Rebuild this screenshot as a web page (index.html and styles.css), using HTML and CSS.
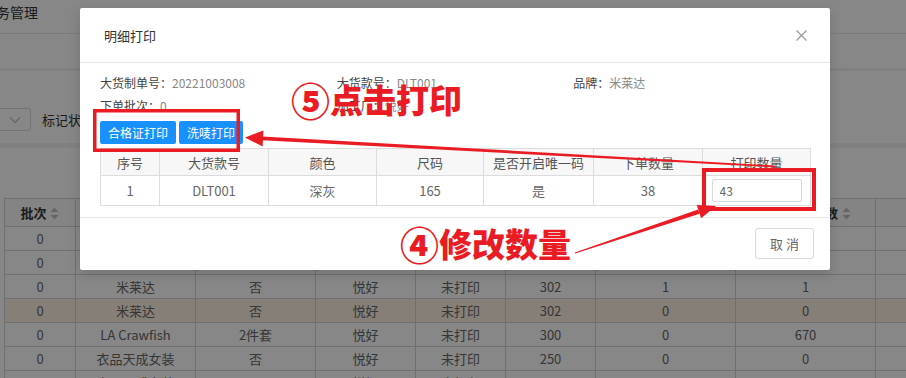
FILE: index.html
```html
<!DOCTYPE html>
<html lang="zh-CN">

<head>
    <meta charset="UTF-8">
    <meta name="viewport" content="width=device-width, initial-scale=1.0">
    <title>明细打印</title>
    <link rel="stylesheet" href="styles.css">
</head>

<body>
    <!-- page behind the dialog -->
    <div class="page">
        <div class="topbar"><span class="crumb">务管理</span></div>
        <div class="tabbar"></div>
        <div class="filter-card">
            <div class="select">
                <svg width="12" height="8" viewBox="0 0 12 8"><path d="M1 1.5 6 6.5 11 1.5" fill="none" stroke="#bfbfbf" stroke-width="1.2"/></svg>
            </div>
            <span class="filter-label">标记状态</span>
        </div>
        <div class="table-card">
            <table class="list-table">
                <colgroup>
                    <col style="width:71px"><col style="width:120px"><col style="width:120px"><col style="width:100px">
                    <col style="width:90px"><col style="width:90px"><col style="width:140px"><col style="width:140px"><col style="width:100px">
                </colgroup>
                <thead>
                    <tr>
                        <th>批次 <svg class="sort" width="9" height="13" viewBox="0 0 9 13"><path d="M4.5 0.5 8.5 5H0.5Z M4.5 12.5 8.5 8H0.5Z" fill="#bfbfbf"/></svg></th>
                        <th>品牌</th>
                        <th>是否套装</th>
                        <th>加工厂</th>
                        <th>状态</th>
                        <th>尺码数</th>
                        <th>已打印数</th>
                        <th>合格证打印数 <svg class="sort" width="9" height="13" viewBox="0 0 9 13"><path d="M4.5 0.5 8.5 5H0.5Z M4.5 12.5 8.5 8H0.5Z" fill="#bfbfbf"/></svg></th>
                        <th></th>
                    </tr>
                </thead>
                <tbody>
                    <tr><td>0</td><td>米莱达</td><td>否</td><td>悦好</td><td>未打印</td><td>165</td><td>0</td><td>0</td><td></td></tr>
                    <tr><td>0</td><td>米莱达</td><td>否</td><td>悦好</td><td>未打印</td><td>302</td><td>0</td><td>0</td><td></td></tr>
                    <tr><td>0</td><td>米莱达</td><td>否</td><td>悦好</td><td>未打印</td><td>302</td><td>1</td><td>1</td><td></td></tr>
                    <tr class="row-active"><td>0</td><td>米莱达</td><td>否</td><td>悦好</td><td>未打印</td><td>302</td><td>0</td><td>0</td><td></td></tr>
                    <tr><td>0</td><td>LA Crawfish</td><td>2件套</td><td>悦好</td><td>未打印</td><td>300</td><td>0</td><td>670</td><td></td></tr>
                    <tr><td>0</td><td>衣品天成女装</td><td>否</td><td>悦好</td><td>未打印</td><td>250</td><td>0</td><td>0</td><td></td></tr>
                    <tr><td>0</td><td>衣品天成女装</td><td>否</td><td>悦好</td><td>未打印</td><td>250</td><td>0</td><td>0</td><td></td></tr>
                </tbody>
            </table>
        </div>
    </div>

    <div class="mask"></div>

    <div class="modal">
        <div class="modal-header">
            <span class="modal-title">明细打印</span>
            <svg class="modal-close" width="11" height="11" viewBox="0 0 11 11"><path d="M0.5 0.5 10.5 10.5 M10.5 0.5 0.5 10.5" stroke="#999" stroke-width="1.2"/></svg>
        </div>
        <div class="modal-body">
            <div class="info-grid">
                <div class="info-item"><span class="info-label">大货制单号：</span><span class="info-value">20221003008</span></div>
                <div class="info-item"><span class="info-label">大货款号：</span><span class="info-value">DLT001</span></div>
                <div class="info-item"><span class="info-label">品牌：</span><span class="info-value">米莱达</span></div>
                <div class="info-item"><span class="info-label">下单批次：</span><span class="info-value">0</span></div>
                <div class="info-item"><span class="info-label">加工厂：</span><span class="info-value">悦好</span></div>
            </div>
            <div class="btn-group">
                <button class="btn-primary">合格证打印</button>
                <button class="btn-primary">洗唛打印</button>
            </div>
            <table class="detail-table">
                <colgroup>
                    <col style="width:59px"><col style="width:109px"><col style="width:108px"><col style="width:107px">
                    <col style="width:110px"><col style="width:109px"><col style="width:108px">
                </colgroup>
                <thead>
                    <tr><th>序号</th><th>大货款号</th><th>颜色</th><th>尺码</th><th>是否开启唯一码</th><th>下单数量</th><th>打印数量</th></tr>
                </thead>
                <tbody>
                    <tr>
                        <td>1</td><td>DLT001</td><td>深灰</td><td>165</td><td>是</td><td>38</td>
                        <td><input class="qty-input" type="text" value="43"></td>
                    </tr>
                </tbody>
            </table>
        </div>
        <div class="modal-footer">
            <button class="btn-default">取 消</button>
        </div>
    </div>

    <!-- red tutorial marks drawn over the screenshot -->
    <div class="annotations">
        <svg class="marks" width="906" height="378" viewBox="0 0 906 378">
            <rect x="94.75" y="110.75" width="143.5" height="39.5" fill="none" stroke="#ea1b23" stroke-width="3.5"/>
            <rect x="704" y="170" width="110" height="39" fill="none" stroke="#ea1b23" stroke-width="4"/>
            <polygon points="262.1,136.6 775,165.6 775,167.4 261.9,140.2" fill="#ea1b23"/>
            <polygon points="245,137.5 263.4,130.5 262.6,146.5" fill="#ea1b23"/>
            <polygon points="574.8,252.5 698.2,209.6 699.6,213.8 575.2,253.5" fill="#ea1b23"/>
            <polygon points="716,206 696.7,205.1 701.1,218.3" fill="#ea1b23"/>
        </svg>
        <span class="mark-text mark-print"><span class="mark-num">⑤</span>点击打印</span>
        <span class="mark-text mark-qty"><span class="mark-num">④</span>修改数量</span>
    </div>
</body>

</html>
```

FILE: styles.css
```css
* {
    box-sizing: border-box;
}

html,
body {
    margin: 0;
    padding: 0;
}

body {
    width: 906px;
    height: 378px;
    overflow: hidden;
    position: relative;
    font-family: "Noto Sans CJK SC", "Open Sans", sans-serif;
    font-size: 13px;
    color: #666;
    background-color: #f0f2f5;
}

/* background page */
.topbar {
    height: 34px;
    background-color: #fff;
    border-bottom: 1px solid #e8e8e8;
    padding-top: 3px;
}

.crumb {
    display: inline-block;
    margin-left: -4px;
    font-size: 14px;
    line-height: 18px;
    color: #333;
}

.tabbar {
    height: 34px;
    background-color: #fff;
}

.filter-card {
    height: 72px;
    margin-top: 3px;
    background-color: #fff;
    padding-top: 37px;
    display: flex;
    align-items: flex-start;
}

.select {
    width: 60px;
    height: 23px;
    margin-left: -29px;
    border: 1px solid #d9d9d9;
    border-radius: 3px;
    display: flex;
    align-items: center;
    justify-content: flex-end;
    padding-right: 9px;
}

.filter-label {
    margin-left: 11px;
    line-height: 23px;
    color: #333;
}

.table-card {
    margin-top: 5px;
    background-color: #fff;
    padding: 50px 0 0 4px;
    height: 300px;
}

.list-table {
    border-collapse: collapse;
    table-layout: fixed;
    width: 971px;
}

.list-table th,
.list-table td {
    border: 1px solid #d2d2d2;
    text-align: center;
    padding: 0;
    white-space: nowrap;
    overflow: hidden;
}

.list-table th {
    height: 28px;
    color: #333;
    font-weight: bold;
    background-color: #fafafa;
}

.list-table td {
    height: 24px;
    color: #666;
}

.list-table .sort {
    vertical-align: -2px;
    margin-left: 1px;
}

.list-table .row-active td {
    background-color: #fdf0e2;
}

.mask {
    position: absolute;
    inset: 0;
    background-color: rgba(0, 0, 0, 0.47);
}

/* dialog */
.modal {
    position: absolute;
    left: 80px;
    top: 8px;
    width: 750px;
    background-color: #fff;
    border-radius: 2px;
    box-shadow: 0 4px 12px rgba(0, 0, 0, 0.15);
}

.modal-header {
    height: 55px;
    padding: 0 23px 0 24px;
    display: flex;
    align-items: center;
    justify-content: space-between;
    border-bottom: 1px solid #e8e8e8;
}

.modal-title {
    font-size: 13px;
    color: #333;
}

.modal-body {
    padding: 8px 20px 11px;
}

.info-grid {
    display: grid;
    grid-template-columns: repeat(3, 1fr);
}

.info-item {
    font-size: 12px;
    line-height: 23px;
}

.info-label {
    color: #444;
}

.info-value {
    color: #888;
}

.btn-group {
    display: flex;
    gap: 3px;
    margin-top: 4px;
}

.btn-primary {
    height: 23px;
    padding: 0 8px;
    border: none;
    border-radius: 2px;
    background-color: #1890ff;
    color: #fff;
    font-family: inherit;
    font-size: 12px;
    cursor: pointer;
}

.detail-table {
    margin-top: 4px;
    border-collapse: collapse;
    table-layout: fixed;
    width: 710px;
}

.detail-table th,
.detail-table td {
    border: 1px solid #dcdcdc;
    text-align: center;
    padding: 0;
}

.detail-table th {
    height: 27px;
    font-weight: normal;
    color: #555;
    background-color: #f7f7f7;
}

.detail-table td {
    height: 30px;
    color: #666;
}

.qty-input {
    width: 90px;
    height: 23px;
    border: 1px solid #d9d9d9;
    border-radius: 2px;
    padding: 0 7px;
    font-family: inherit;
    font-size: 12px;
    color: #666;
    vertical-align: middle;
}

.modal-footer {
    border-top: 1px solid #e8e8e8;
    padding: 10px 16px 11px;
    display: flex;
    justify-content: flex-end;
}

.btn-default {
    width: 59px;
    height: 31px;
    border: 1px solid #d9d9d9;
    border-radius: 3px;
    background-color: #fff;
    color: #666;
    font-family: inherit;
    font-size: 13px;
}

/* tutorial marks */
.annotations {
    position: absolute;
    inset: 0;
    pointer-events: none;
}

.marks {
    position: absolute;
    left: 0;
    top: 0;
}

.mark-text {
    position: absolute;
    display: flex;
    align-items: center;
    font-family: "Noto Sans CJK SC", sans-serif;
    font-weight: 900;
    font-size: 33px;
    line-height: 1;
    color: #ea1b23;
    white-space: nowrap;
}

.mark-num {
    font-size: 39px;
    line-height: 33px;
}

.mark-print {
    left: 291px;
    top: 83px;
}

.mark-qty {
    left: 400px;
    top: 227px;
}
```
